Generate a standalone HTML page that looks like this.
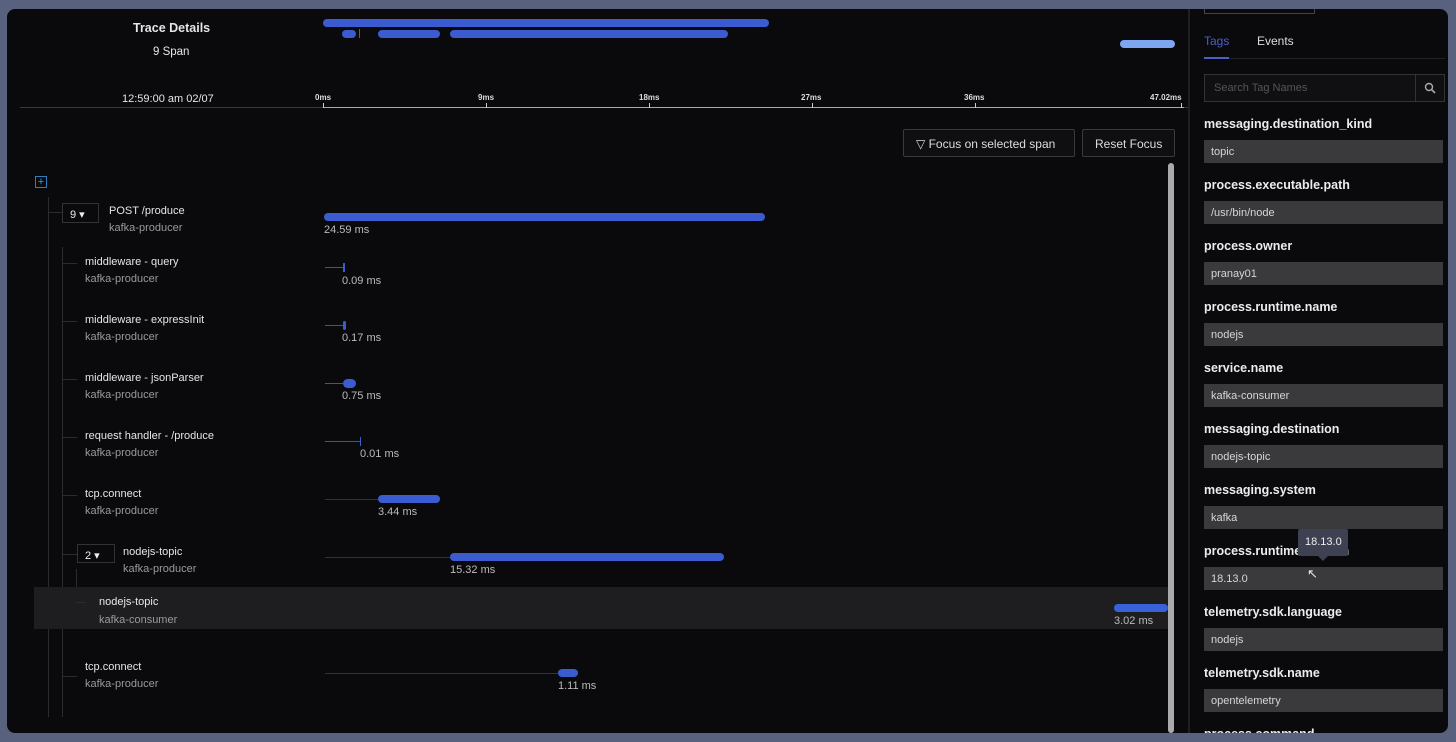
<!DOCTYPE html><html><head><style>
*{margin:0;padding:0;box-sizing:border-box}
body{width:1456px;height:742px;background:#58627f;font-family:"Liberation Sans",sans-serif;position:relative;overflow:hidden}
.p{position:absolute;left:7px;top:9px;width:1441px;height:724px;background:#0a0a0d;border-radius:8px;overflow:hidden}
.a{position:absolute}
.t{position:absolute;color:#e6e6e6;font-size:11px;white-space:nowrap}
.s{position:absolute;color:#9a9a9a;font-size:11px;white-space:nowrap}
.bar{position:absolute;background:#3b5bd0;border-radius:5px;height:9px}
.ln{position:absolute;background:#2c2c30}
.lab{position:absolute;left:1197px;color:#ececec;font-size:12.5px;font-weight:bold;white-space:nowrap}
.val{position:absolute;left:1197px;width:239px;height:23px;background:#3a3a3c;color:#d6d6d6;font-size:11px;padding:6px 7px}
.tk{position:absolute;color:#ddd;font-size:8px;font-weight:bold}
.btn{position:absolute;border:1px solid #3a3a3e;background:#0f0f12;color:#ddd;font-size:12px;height:28px;padding:7px 12px;border-radius:2px;white-space:nowrap}
</style></head><body><div class="p">
<div class="t" style="left:126px;top:12px;font-size:12.5px;font-weight:bold">Trace Details</div>
<div class="t" style="left:146px;top:37px;font-size:11.5px">9 Span</div>
<div class="t" style="left:115px;top:84px;font-size:11px">12:59:00 am 02/07</div>
<div class="bar" style="left:316px;top:10px;width:446px;height:8px"></div>
<div class="bar" style="left:335px;top:21px;width:14px;height:8px"></div>
<div class="a" style="left:352px;top:20px;width:1px;height:9px;background:#3b5bd0"></div>
<div class="bar" style="left:371px;top:21px;width:62px;height:8px"></div>
<div class="bar" style="left:443px;top:21px;width:278px;height:8px"></div>
<div class="bar" style="left:1113px;top:31px;width:55px;height:8px;background:#7ea6f0"></div>
<div class="a" style="left:13px;top:98px;width:1168px;height:1px;background:#3a3a3e"></div>
<div class="a" style="left:316px;top:98px;width:861px;height:1px;background:#aaa"></div>
<div class="tk" style="left:308px;top:84px">0ms</div><div class="a" style="left:316px;top:94px;width:1px;height:5px;background:#ccc"></div>
<div class="tk" style="left:471px;top:84px">9ms</div><div class="a" style="left:479px;top:94px;width:1px;height:5px;background:#ccc"></div>
<div class="tk" style="left:632px;top:84px">18ms</div><div class="a" style="left:642px;top:94px;width:1px;height:5px;background:#ccc"></div>
<div class="tk" style="left:794px;top:84px">27ms</div><div class="a" style="left:805px;top:94px;width:1px;height:5px;background:#ccc"></div>
<div class="tk" style="left:957px;top:84px">36ms</div><div class="a" style="left:968px;top:94px;width:1px;height:5px;background:#ccc"></div>
<div class="tk" style="left:1143px;top:84px">47.02ms</div><div class="a" style="left:1174px;top:94px;width:1px;height:5px;background:#ccc"></div>
<div class="btn" style="left:896px;top:120px;width:172px">&#9661; Focus on selected span</div>
<div class="btn" style="left:1075px;top:120px;width:93px">Reset Focus</div>
<div class="a" style="left:1161px;top:154px;width:6px;height:570px;background:#aaa;border-radius:3px"></div>
<div class="a" style="left:1181px;top:0;width:2px;height:724px;background:#1f1f22"></div>
<div class="a" style="left:28px;top:167px;width:12px;height:12px;border:1px solid #2f7fc0;color:#2f9fe0;font-size:11px;line-height:10px;text-align:center">+</div>
<div class="ln" style="left:41px;top:188px;width:1px;height:520px"></div>
<div class="ln" style="left:55px;top:238px;width:1px;height:470px"></div>
<div class="ln" style="left:41px;top:203px;width:14px;height:1px"></div>
<div class="a" style="left:55px;top:194px;width:37px;height:20px;border:1px solid #333;color:#eee;font-size:11px;padding:4px 7px">9 &#9662;</div>
<div class="t" style="left:102px;top:196px">POST /produce</div><div class="s" style="left:102px;top:213px">kafka-producer</div>
<div class="bar" style="left:317px;top:204px;width:441px;height:8px"></div><div class="s" style="left:317px;top:215px;color:#bbb">24.59 ms</div>
<div class="ln" style="left:56px;top:254px;width:14px;height:1px"></div>
<div class="t" style="left:78px;top:247px">middleware - query</div><div class="s" style="left:78px;top:264px">kafka-producer</div>
<div class="ln" style="left:318px;top:258px;width:18px;height:1px;background:#555"></div><div class="a" style="left:336px;top:254px;width:2px;height:9px;background:#3b5bd0"></div><div class="s" style="left:335px;top:266px;color:#bbb">0.09 ms</div>
<div class="ln" style="left:56px;top:312px;width:14px;height:1px"></div>
<div class="t" style="left:78px;top:305px">middleware - expressInit</div><div class="s" style="left:78px;top:322px">kafka-producer</div>
<div class="ln" style="left:318px;top:316px;width:18px;height:1px;background:#555"></div><div class="a" style="left:336px;top:312px;width:3px;height:9px;background:#3b5bd0;border-radius:2px"></div><div class="s" style="left:335px;top:323px;color:#bbb">0.17 ms</div>
<div class="ln" style="left:56px;top:370px;width:14px;height:1px"></div>
<div class="t" style="left:78px;top:363px">middleware - jsonParser</div><div class="s" style="left:78px;top:380px">kafka-producer</div>
<div class="ln" style="left:318px;top:374px;width:18px;height:1px;background:#555"></div><div class="bar" style="left:336px;top:370px;width:13px;height:9px"></div><div class="s" style="left:335px;top:381px;color:#bbb">0.75 ms</div>
<div class="ln" style="left:56px;top:428px;width:14px;height:1px"></div>
<div class="t" style="left:78px;top:421px">request handler - /produce</div><div class="s" style="left:78px;top:438px">kafka-producer</div>
<div class="ln" style="left:318px;top:432px;width:35px;height:1px;background:#555"></div><div class="a" style="left:353px;top:428px;width:1px;height:9px;background:#3b5bd0"></div><div class="s" style="left:353px;top:439px;color:#bbb">0.01 ms</div>
<div class="ln" style="left:56px;top:486px;width:14px;height:1px"></div>
<div class="t" style="left:78px;top:479px">tcp.connect</div><div class="s" style="left:78px;top:496px">kafka-producer</div>
<div class="ln" style="left:318px;top:490px;width:54px;height:1px;background:#333"></div><div class="bar" style="left:371px;top:486px;width:62px;height:8px"></div><div class="s" style="left:371px;top:497px;color:#bbb">3.44 ms</div>
<div class="ln" style="left:56px;top:545px;width:14px;height:1px"></div>
<div class="ln" style="left:69px;top:560px;width:1px;height:34px"></div>
<div class="a" style="left:70px;top:535px;width:38px;height:19px;border:1px solid #333;color:#eee;font-size:11px;padding:4px 7px">2 &#9662;</div>
<div class="t" style="left:116px;top:537px">nodejs-topic</div><div class="s" style="left:116px;top:554px">kafka-producer</div>
<div class="ln" style="left:318px;top:548px;width:126px;height:1px;background:#333"></div><div class="bar" style="left:443px;top:544px;width:274px;height:8px"></div><div class="s" style="left:443px;top:555px;color:#bbb">15.32 ms</div>
<div class="a" style="left:27px;top:578px;width:1134px;height:42px;background:#1e1e21"></div>
<div class="ln" style="left:69px;top:593px;width:10px;height:1px"></div>
<div class="t" style="left:92px;top:587px">nodejs-topic</div><div class="s" style="left:92px;top:605px">kafka-consumer</div>
<div class="bar" style="left:1107px;top:595px;width:54px;height:8px;background:#3a62d8"></div><div class="s" style="left:1107px;top:606px;color:#bbb">3.02 ms</div>
<div class="ln" style="left:56px;top:667px;width:14px;height:1px"></div>
<div class="t" style="left:78px;top:652px">tcp.connect</div><div class="s" style="left:78px;top:669px">kafka-producer</div>
<div class="ln" style="left:318px;top:664px;width:234px;height:1px;background:#333"></div><div class="bar" style="left:551px;top:660px;width:20px;height:8px"></div><div class="s" style="left:551px;top:671px;color:#bbb">1.11 ms</div>

<div class="a" style="left:1197px;top:-6px;width:111px;height:11px;border:1px solid #444"></div>
<div class="t" style="left:1197px;top:25px;font-size:12px;color:#4a5fc8">Tags</div>
<div class="t" style="left:1250px;top:25px;font-size:12px;color:#ddd">Events</div>
<div class="a" style="left:1197px;top:49px;width:241px;height:1px;background:#222"></div>
<div class="a" style="left:1197px;top:48px;width:25px;height:2px;background:#4a5fc8"></div>
<div class="a" style="left:1197px;top:65px;width:241px;height:28px;border:1px solid #333;background:#101013"></div>
<div class="a" style="left:1408px;top:65px;width:1px;height:28px;background:#333"></div>
<div class="s" style="left:1207px;top:73px;color:#555">Search Tag Names</div>
<svg class="a" style="left:1417px;top:73px" width="12" height="12" viewBox="0 0 12 12"><circle cx="5" cy="5" r="3.5" fill="none" stroke="#aaa" stroke-width="1.4"/><path d="M7.6 7.6L11 11" stroke="#aaa" stroke-width="1.6"/></svg>
<div class="lab" style="top:108px">messaging.destination_kind</div><div class="val" style="top:131px">topic</div>
<div class="lab" style="top:169px">process.executable.path</div><div class="val" style="top:192px">/usr/bin/node</div>
<div class="lab" style="top:230px">process.owner</div><div class="val" style="top:253px">pranay01</div>
<div class="lab" style="top:291px">process.runtime.name</div><div class="val" style="top:314px">nodejs</div>
<div class="lab" style="top:352px">service.name</div><div class="val" style="top:375px">kafka-consumer</div>
<div class="lab" style="top:413px">messaging.destination</div><div class="val" style="top:436px">nodejs-topic</div>
<div class="lab" style="top:474px">messaging.system</div><div class="val" style="top:497px">kafka</div>
<div class="lab" style="top:535px">process.runtime.version</div><div class="val" style="top:558px">18.13.0</div>
<div class="a" style="left:1291px;top:520px;width:50px;height:27px;background:#3d4152;color:#eee;font-size:11px;padding:7px 7px;border-radius:2px">18.13.0</div>
<div class="a" style="left:1311px;top:547px;border-left:5px solid transparent;border-right:5px solid transparent;border-top:5px solid #3d4152;width:0;height:0"></div>
<div class="t" style="left:1300px;top:557px;font-size:13px">&#8598;</div>
<div class="lab" style="top:596px">telemetry.sdk.language</div><div class="val" style="top:619px">nodejs</div>
<div class="lab" style="top:657px">telemetry.sdk.name</div><div class="val" style="top:680px">opentelemetry</div>
<div class="lab" style="top:718px">process.command</div>
</div></body></html>
